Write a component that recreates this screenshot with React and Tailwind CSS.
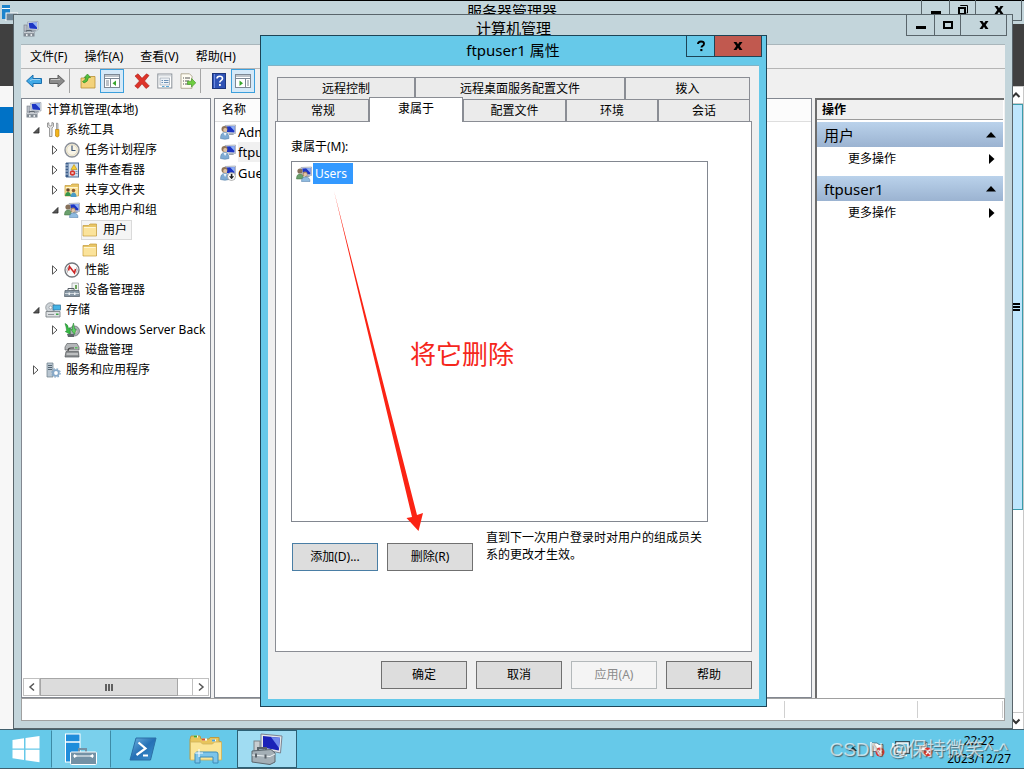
import React from "react";

const FONT = "font-['Noto_Sans','Noto_Sans_CJK_SC',sans-serif]";

/* ---------- small 16px icons ---------- */

function Svg({ children, size = "size-4", box = "0 0 16 16" }) {
  return (
    <svg viewBox={box} className={`${size} shrink-0`} aria-hidden="true">
      {children}
    </svg>
  );
}

function Screen({ x = 5, y = 1 }) {
  return (
    <g transform={`translate(${x} ${y})`}>
      <path d="M0 0.5 L10.5 0 L10.5 8.5 L1 8 Z" fill="#dfe4ea" stroke="#8b94a3" strokeWidth="0.6" />
      <path d="M1.2 1.5 L9.5 1 L9.5 7.5 L2 7 Z" fill="#1c35c4" />
      <path d="M5 1.3 L9.5 1 L9.5 6 Z" fill="#8fb0f5" />
      <path d="M4 8.4 h4 l1 1.6 h-5z" fill="#9aa2ad" />
    </g>
  );
}

function ComputerIcon() {
  return (
    <Svg>
      <rect x="1" y="4" width="3" height="6" fill="#b9bec6" stroke="#747b85" strokeWidth="0.6" />
      <Screen x={4.5} y={0.5} />
      <path d="M0.5 10.5 h11 v5 h-11z" fill="#808992" />
      <path d="M1 11 h10 v1.2 h-10z" fill="#c7ccd2" />
      <path d="M3 13 h1.6 v2 h-1.6z M7.5 13 h1.6 v2 h-1.6z" fill="#e6e9ec" />
      <path d="M3.5 10.5 v-1 h5 v1" fill="none" stroke="#5f6770" />
    </Svg>
  );
}

function UserIcon({ disabled = false }) {
  return (
    <Svg>
      <Screen />
      <circle cx="4.5" cy="5" r="3" fill="#8f7458" />
      <circle cx="5.2" cy="6" r="2" fill="#e2c3a6" />
      <path d="M0.5 14.5 q0 -6 4 -6 q4.5 0 4.5 6 q-4 1.6 -8.500 0z" fill="#7fabd4" stroke="#4b779f" strokeWidth="0.5" />
      <path d="M3.500 9 l1.600 3 l1.500 -3z" fill="#eef5fb" />
      {disabled && (
        <g>
          <circle cx="11.5" cy="11.500" r="4" fill="#fff" stroke="#8c8c8c" strokeWidth="0.7" />
          <path d="M10.800 8.800 h1.600 v2.400 h1.800 l-2.600 3 l-2.600 -3 h1.800z" fill="#222" />
        </g>
      )}
    </Svg>
  );
}

function GroupIcon() {
  return (
    <Svg>
      <Screen />
      <circle cx="4" cy="5" r="2.600" fill="#86705a" />
      <path d="M0.500 13 q0 -5 3.500 -5 q3.500 0 3.500 5z" fill="#6ba06d" stroke="#3b6e3c" strokeWidth="0.5" />
      <circle cx="9" cy="8" r="2.500" fill="#a88667" />
      <circle cx="9.300" cy="8.500" r="1.700" fill="#e3c4a8" />
      <path d="M5.500 15.500 q0 -4.500 4 -4.500 q4.500 0 4.500 4.500z" fill="#8fbbe0" stroke="#4877a6" strokeWidth="0.5" />
    </Svg>
  );
}

function ToolsIcon() {
  return (
    <Svg>
      <path d="M2.500 1 v4 l2 1 v8.500 h2.500 v-8.500 l1.500 -1.500 v-3.500 l-1.600 -0.500 v3 l-2 0.600 l-1 -1 v-2.300z" fill="#e3e3e3" stroke="#777" strokeWidth="0.7" />
      <path d="M11.500 1 l1.500 0.500 v6 h-1.500z" fill="#cfd3d8" stroke="#7b7b7b" strokeWidth="0.6" />
      <path d="M10.500 7.500 h3.500 v6.500 q-1.700 2 -3.500 0z" fill="#f3b51c" stroke="#b27b08" strokeWidth="0.6" />
    </Svg>
  );
}

function ClockIcon() {
  return (
    <Svg>
      <circle cx="8" cy="8" r="7" fill="#f7f3e6" stroke="#8a8f98" strokeWidth="1.400" />
      <circle cx="8" cy="8" r="5.300" fill="none" stroke="#d8cfae" strokeWidth="0.700" />
      <path d="M8 3.500 V8.500 H11.500" fill="none" stroke="#3f5877" strokeWidth="1.200" />
    </Svg>
  );
}

function EventIcon() {
  return (
    <Svg>
      <rect x="2.500" y="1" width="12" height="14" fill="#cfdff0" stroke="#4d6d95" />
      <rect x="1.500" y="1" width="3" height="14" fill="#3b5d8a" />
      <path d="M1 3 h3 M1 6 h3 M1 9 h3 M1 12 h3" stroke="#dfe8f2" strokeWidth="0.800" />
      <path d="M10 2.500 l3 5 h-6z" fill="#f8cc33" stroke="#a98200" strokeWidth="0.500" />
      <circle cx="8.500" cy="11" r="2.700" fill="#d5352c" />
      <path d="M7.500 10 l2 2 M9.500 10 l-2 2" stroke="#fff" strokeWidth="0.800" />
      <path d="M11.500 9.500 h2 M11.500 11.500 h2" stroke="#5b7ba5" strokeWidth="0.700" />
    </Svg>
  );
}

function FolderShape() {
  return (
    <g>
      <path d="M1 3.500 h5.500 l1.500 -1.500 h6.500 v12 h-13.500z" fill="#e8c565" stroke="#c29a3c" strokeWidth="0.700" />
      <path d="M1.500 5 h12.500 v8.500 h-12.500z" fill="#fbe39b" />
      <path d="M2 5.500 h11.500" stroke="#fff6d2" />
    </g>
  );
}

function FolderIcon() {
  return (
    <Svg>
      <FolderShape />
    </Svg>
  );
}

function SharedFolderIcon() {
  return (
    <Svg>
      <FolderShape />
      <circle cx="4" cy="8" r="1.800" fill="#6b4a2d" />
      <path d="M1 14 q0.500 -4 3 -4 q2.500 0 3 4z" fill="#37964b" />
      <circle cx="9.500" cy="8.500" r="1.800" fill="#8d5b35" />
      <path d="M6.500 15 q0.500 -4.500 3 -4.500 q3 0 3 4.500z" fill="#4b9bc6" />
    </Svg>
  );
}

function PerfIcon() {
  return (
    <Svg>
      <circle cx="8" cy="8" r="7" fill="#fbfbfb" stroke="#72767c" strokeWidth="1.300" />
      <path d="M3.500 10.500 a5 5 0 0 1 1 -6 M12.500 10.500 a5 5 0 0 0 0 -5" fill="none" stroke="#a8a8a8" />
      <path d="M4.500 8.500 L5.500 4.500 L10.500 11 L11.500 7" fill="none" stroke="#cc2424" strokeWidth="1.600" />
    </Svg>
  );
}

function DeviceIcon() {
  return (
    <Svg>
      <path d="M8 1 h6.500 v8 h-6.500z" fill="#f0f3f2" stroke="#969c9c" strokeWidth="0.700" />
      <path d="M11 3 h2 v4 h-2z" fill="#6ea65c" />
      <path d="M4 8 v-1.500 h6 v1.500" fill="none" stroke="#555d66" />
      <path d="M1 8.500 h14 l0.500 6 h-15z" fill="#8796a3" stroke="#4f5a64" strokeWidth="0.700" />
      <path d="M1 11.500 h14" stroke="#cfd7dd" />
      <path d="M4.500 10.500 h1.500 v2.500 h-1.500z M10 10.500 h1.500 v2.500 h-1.500z" fill="#eef1f3" />
    </Svg>
  );
}

function StorageIcon() {
  return (
    <Svg>
      <circle cx="5.500" cy="5.500" r="4.800" fill="#cdd3d7" stroke="#7f878d" strokeWidth="0.700" />
      <circle cx="5.500" cy="5.500" r="1.500" fill="#fff" stroke="#7f878d" strokeWidth="0.600" />
      <rect x="8" y="3" width="7.500" height="5" fill="#44b3e6" stroke="#2b6d93" strokeWidth="0.700" />
      <path d="M1 9.500 h14 v5.500 h-14z" fill="#dde0e2" stroke="#70767b" strokeWidth="0.800" />
      <rect x="11" y="11.500" width="2.500" height="1.500" fill="#3da54a" />
      <path d="M3 12.500 h6" stroke="#8d9398" />
    </Svg>
  );
}

function BackupIcon() {
  return (
    <Svg>
      <circle cx="10.500" cy="9" r="5" fill="#aab0b5" stroke="#62686d" strokeWidth="0.700" />
      <circle cx="11" cy="9.500" r="1.500" fill="#f3d7c9" />
      <path d="M1 1.500 q3 0.500 3.500 5 l1.700 -1 v7 l-5 -3 l1.500 -0.700 q-0.500 -4 -1.700 -7.300z" fill="#35ba43" stroke="#1d7a2a" strokeWidth="0.500" />
      <path d="M9.500 1 q-1.500 3 -1 6.500 l-1.500 0 l3.500 5 l1.700 -5.500 l-1.500 0 q-0.700 -3 -1.200 -6z" fill="#5fd165" stroke="#1d7a2a" strokeWidth="0.500" />
      <path d="M3 12 h7 v3 h-6z" fill="#60676c" />
    </Svg>
  );
}

function DiskIcon() {
  return (
    <Svg>
      <path d="M3 1.500 h10 l2 3.500 v3 h-14 v-3z" fill="#b4b7b9" stroke="#5f6365" strokeWidth="0.700" />
      <rect x="11" y="5" width="2.500" height="1.500" fill="#5cc05e" />
      <path d="M4 9 q0 -3 3 -3 h3" fill="none" stroke="#444" strokeWidth="1.200" />
      <path d="M2 9.500 h12.500 l0.500 5.500 h-14z" fill="#8d9092" stroke="#55595b" strokeWidth="0.700" />
      <path d="M2.500 12 h11.500" stroke="#eceeee" />
    </Svg>
  );
}

function ServicesIcon() {
  return (
    <Svg>
      <path d="M2 1 h6 v14 h-6z" fill="#b9c6d1" stroke="#6b7b88" strokeWidth="0.700" />
      <path d="M3 3.500 h4 M3 5.500 h4 M3 7.500 h4" stroke="#566672" />
      <circle cx="11" cy="11" r="2.800" fill="none" stroke="#86a9c9" strokeWidth="1.800" />
      <circle cx="11" cy="11" r="4.200" fill="none" stroke="#86a9c9" strokeWidth="1.200" strokeDasharray="1.700 1.600" />
    </Svg>
  );
}

/* ---------- toolbar icons ---------- */

function ArrowIcon({ left = false, fill, stroke }) {
  return (
    <Svg>
      <path
        d={left ? "M0.500 8 L7 2 V5.500 H15.500 V10.500 H7 V14 Z" : "M15.500 8 L9 2 V5.500 H0.500 V10.500 H9 V14 Z"}
        fill={fill}
        stroke={stroke}
        strokeLinejoin="round"
      />
      <path d={left ? "M4 7.500 L6.500 6.500 H14" : "M2 6.500 H11"} stroke="#ffffff" strokeOpacity="0.500" fill="none" />
    </Svg>
  );
}

function UpFolderIcon() {
  return (
    <Svg>
      <path d="M1 5 h5 l1 -1.500 h8 v11.500 h-14z" fill="#f3d27b" stroke="#b88f35" strokeWidth="0.800" />
      <path d="M2.500 8.500 q3 -1 3.500 -4 h-1.800 l3.300 -3.500 l3 3.500 h-2 q-0.500 4.500 -4.500 5.500z" fill="#54bf3d" stroke="#2d8420" strokeWidth="0.600" />
    </Svg>
  );
}

function PaneIcon({ right = false }) {
  return (
    <Svg>
      <rect x="0.500" y="1.500" width="15" height="13" fill="#fff" stroke="#7d8894" />
      <path d="M1 3 h14 M1 5.500 h14" stroke="#7d8894" />
      <path d={right ? "M10.500 6 v8" : "M6.500 6 v8"} stroke="#7d8894" />
      <path d={right ? "M12 8 h2 M12 10 h2 M12 12 h2" : "M2 8 h3 M2 10 h3 M2 12 h3"} stroke="#7d8894" />
      <path d={right ? "M4.500 7.500 l3.500 2.700 l-3.500 2.700z" : "M12 7.500 l-3.500 2.700 l3.500 2.700z"} fill="#37a52b" />
    </Svg>
  );
}

function DeleteIcon() {
  return (
    <Svg>
      <path d="M1 3 L4 0.800 L8 5.300 L12.500 0.800 L15 2.500 L10.500 8 L15.300 13 L12 15.500 L8 10.800 L4 15.500 L0.800 13 L5.500 8 Z" fill="#dd3329" stroke="#a81c16" strokeWidth="0.600" />
    </Svg>
  );
}

function PropertiesIcon() {
  return (
    <Svg>
      <rect x="0.800" y="1" width="14" height="14" fill="#fff" stroke="#8b9299" />
      <path d="M1 2.800 h13.500" stroke="#c4cad0" />
      <rect x="3" y="5" width="9.500" height="7" fill="#edf2f7" stroke="#97a1ab" strokeWidth="0.700" />
      <path d="M4.500 7.500 h1.500 M7 7.500 h4.500 M4.500 9.500 h1.500 M7 9.500 h4.500" stroke="#6d91b5" />
      <path d="M5 13.500 h2.500 M9 13.500 h3" stroke="#5aa8d8" />
    </Svg>
  );
}

function ExportIcon() {
  return (
    <Svg>
      <path d="M1 0.800 h8.500 l2.500 2.500 v12 h-11z" fill="#fffdf2" stroke="#a29a82" strokeWidth="0.800" />
      <path d="M3 5 h1 M5 5 h5 M3 8 h1 M5 8 h4 M3 11 h1 M5 11 h5" stroke="#555" />
      <path d="M7.500 8.200 h4 v-2.700 l4.300 4.300 l-4.300 4.300 v-2.700 h-4z" fill="#6fce40" stroke="#3c8f21" strokeWidth="0.600" />
    </Svg>
  );
}

function HelpIcon() {
  return (
    <Svg>
      <rect x="1.500" y="0.500" width="13" height="15" fill="#2f52b5" stroke="#1c357d" />
      <path d="M3.500 1 v14" stroke="#6d8be0" />
      <path d="M6 5.500 q0 -2.300 2.800 -2.300 q2.700 0 2.700 2.200 q0 1.300 -1.500 2.200 q-1.200 0.700 -1.200 2" fill="none" stroke="#fff" strokeWidth="1.600" />
      <rect x="8" y="11" width="1.800" height="1.900" fill="#fff" />
    </Svg>
  );
}

/* ---------- window parts ---------- */

function Glyph({ kind }) {
  return (
    <svg viewBox="0 0 12 12" className="size-3" aria-hidden="true">
      {kind === "min" && <rect x="1" y="7" width="10" height="3" />}
      {kind === "max" && <rect x="2" y="3" width="8" height="6" fill="none" stroke="#000" strokeWidth="2" />}
      {kind === "restore" && (
        <g fill="none" stroke="#000">
          <path d="M3.500 2 V1.500 H10.500 V9 H9.500" />
          <rect x="2" y="4" width="6" height="6" strokeWidth="2" />
        </g>
      )}
      {kind === "close" && <path d="M1.500 2 h3 L6 4.300 L7.500 2 h3 L7.700 6 L10.500 10 h-3 L6 7.700 L4.500 10 h-3 L4.300 6 Z" />}
      {kind === "help" && (
        <g>
          <path d="M3 4 q0 -2.500 3 -2.500 q3 0 3 2.300 q0 1.300 -1.400 2 q-1.100 0.600 -1.100 1.700" fill="none" stroke="#000" strokeWidth="1.900" />
          <rect x="5.300" y="9" width="2.100" height="2.100" />
        </g>
      )}
    </svg>
  );
}

function WinButton({ kind, label, className }) {
  return (
    <button aria-label={label} className={`flex items-center justify-center ${className}`}>
      <Glyph kind={kind} />
    </button>
  );
}

function WindowControls({ middle }) {
  return (
    <div className="flex h-[22px] border-x border-b border-[#59656b]">
      <WinButton kind="min" label="最小化" className="w-7 border-r border-[#59656b]" />
      <WinButton kind={middle} label="最大化" className="w-[26px] border-r border-[#59656b]" />
      <WinButton kind="close" label="关闭" className="w-[45px]" />
    </div>
  );
}

function BackWindow() {
  return (
    <div className="absolute inset-x-0 top-px bottom-0 flex flex-col bg-[#f7f7f7]">
      <div className="flex h-[23px] items-start bg-[#c3d5db]">
        <div className="w-[103px] pt-1 pl-0.5">
          <Svg size="w-4 h-4">
            <rect x="0" y="0" width="8" height="14" fill="#1d84cc" />
            <path d="M0 3.500 h8" stroke="#fff" />
            <rect x="4" y="8" width="12" height="8" fill="#6f8798" stroke="#fff" />
          </Svg>
        </div>
        <h2 className="flex-1 text-center text-[15px] leading-5">服务器管理器</h2>
        <div className="-mt-0.5 mr-0.5">
          <WindowControls middle="restore" />
        </div>
      </div>
      <div className="h-[62px] bg-[#404040]" />
      <div className="flex flex-1">
        <div className="flex-1">
          <div className="mt-[21px] h-[26px] bg-[#0072c6]" />
        </div>
        <div className="flex w-[17px] flex-col border-r border-[#c8c8c8] bg-white">
          <button aria-label="向上滚动" className="flex h-[18px] items-center justify-end border-y border-[#c8c8c8] pr-0.5">
            <svg viewBox="0 0 10 10" className="size-2.5"><path d="M1.500 7 L5 3.500 L8.500 7" fill="none" stroke="#333" strokeWidth="2" /></svg>
          </button>
          <div className="flex h-[406px] items-center justify-end border border-[#3a9dac] bg-[#bee6fd] pr-0.5">
            <svg viewBox="0 0 10 8" className="h-2 w-2.5"><path d="M0 1 h10 M0 4 h10 M0 7 h10" stroke="#000" strokeWidth="2" /></svg>
          </div>
          <div className="flex-1" />
          <button aria-label="向下滚动" className="flex h-[17px] items-center justify-end border-t border-[#c8c8c8] pr-0.5">
            <svg viewBox="0 0 10 10" className="size-2.5"><path d="M1.500 3.500 L5 7 L8.500 3.500" fill="none" stroke="#333" strokeWidth="2" /></svg>
          </button>
        </div>
      </div>
    </div>
  );
}

function Expander({ state }) {
  return (
    <span className="flex w-3 shrink-0 justify-center">
      {state && (
        <svg viewBox="0 0 8 10" className="h-2.5 w-2" aria-hidden="true">
          {state === "open" ? (
            <path d="M7 2.500 V8 H1.500 Z" fill="#595959" stroke="#262626" strokeWidth="0.800" />
          ) : (
            <path d="M1.500 0.800 L6 5 L1.500 9.200 Z" fill="#fff" stroke="#555" />
          )}
        </svg>
      )}
    </span>
  );
}

const TREE = [
  { label: "计算机管理(本地)", icon: ComputerIcon, level: 0 },
  { label: "系统工具", icon: ToolsIcon, level: 1, state: "open" },
  { label: "任务计划程序", icon: ClockIcon, level: 2, state: "closed" },
  { label: "事件查看器", icon: EventIcon, level: 2, state: "closed" },
  { label: "共享文件夹", icon: SharedFolderIcon, level: 2, state: "closed" },
  { label: "本地用户和组", icon: GroupIcon, level: 2, state: "open" },
  { label: "用户", icon: FolderIcon, level: 3, selected: true },
  { label: "组", icon: FolderIcon, level: 3 },
  { label: "性能", icon: PerfIcon, level: 2, state: "closed" },
  { label: "设备管理器", icon: DeviceIcon, level: 2 },
  { label: "存储", icon: StorageIcon, level: 1, state: "open" },
  { label: "Windows Server Back", icon: BackupIcon, level: 2, state: "closed" },
  { label: "磁盘管理", icon: DiskIcon, level: 2 },
  { label: "服务和应用程序", icon: ServicesIcon, level: 1, state: "closed" },
];

const INDENT = ["pl-[3px]", "pl-2", "pl-[27px]", "pl-[59px]"];

function TreePane() {
  return (
    <nav className="flex w-[190px] shrink-0 flex-col border border-[#828790] bg-white">
      <ul className="flex-1 overflow-hidden pt-px">
        {TREE.map((n) => (
          <li key={n.label} className={`flex h-5 items-center gap-0.5 ${INDENT[n.level]}`}>
            {(n.level === 1 || n.level === 2) && <Expander state={n.state} />}
            <button
              className={`flex h-5 items-center gap-[5px] border whitespace-nowrap ${
                n.selected ? "border-[#dadada] bg-[#f5f5f5] pr-1" : "border-transparent"
              }`}
            >
              <n.icon />
              {n.label}
            </button>
          </li>
        ))}
      </ul>
      <div className="mr-px ml-px flex h-[18px]">
        <button aria-label="向左滚动" className="flex w-[17px] items-center justify-center border border-[#c0c0c0]">
          <svg viewBox="0 0 8 10" className="h-2.5 w-2"><path d="M6 1.500 L2 5 L6 8.500" fill="none" stroke="#555" strokeWidth="1.500" /></svg>
        </button>
        <div className="flex w-[138px] items-center justify-center border border-[#a6a6a6] bg-[#dcdcdc]">
          <svg viewBox="0 0 8 7" className="h-[7px] w-2"><path d="M1 0 v7 M4 0 v7 M7 0 v7" stroke="#606060" strokeWidth="2" /></svg>
        </div>
        <div className="flex-1 border-y border-[#c0c0c0]" />
        <button aria-label="向右滚动" className="flex w-[17px] items-center justify-center border border-[#c0c0c0]">
          <svg viewBox="0 0 8 10" className="h-2.5 w-2"><path d="M2 1.500 L6 5 L2 8.500" fill="none" stroke="#555" strokeWidth="1.500" /></svg>
        </button>
      </div>
      <div className="h-px" />
    </nav>
  );
}

function ListPane() {
  const rows = [
    { name: "Administrator" },
    { name: "ftpuser1", selected: true },
    { name: "Guest", disabled: true },
  ];
  return (
    <div className="min-w-0 flex-1 border border-[#828790] bg-white">
      <table className="w-full border-collapse">
        <thead>
          <tr>
            <th className="h-[22px] border-b border-[#dedede] bg-[#fcfcfc] p-0 pl-[7px] text-left font-normal">名称</th>
          </tr>
        </thead>
        <tbody className="text-[13px]">
          {rows.map((r) => (
            <tr key={r.name}>
              <td className="h-[21px] p-0 pl-[5px] align-top leading-5">
                <span className="flex items-center gap-0.5">
                  <UserIcon disabled={r.disabled} />
                  <span className={r.selected ? "bg-[#f0f0f0]" : ""}>{r.name}</span>
                </span>
              </td>
            </tr>
          ))}
        </tbody>
      </table>
    </div>
  );
}

function ActionGroup({ title }) {
  return (
    <section className="mb-[5px]">
      <button className="flex h-[25px] w-full items-center justify-between bg-linear-to-b from-[#bad2eb] to-[#9bb3d1] pr-[7px] pl-[7px] text-[15px]">
        {title}
        <svg viewBox="0 0 10 6" className="h-1.5 w-2.5"><path d="M5 0 L10 5.500 H0 Z" /></svg>
      </button>
      <button className="flex h-6 w-full items-center justify-between pr-2 pl-[31px]">
        更多操作
        <svg viewBox="0 0 6 10" className="h-2.5 w-1.5"><path d="M0 0 L5.500 5 L0 10 Z" /></svg>
      </button>
    </section>
  );
}

function ActionsPane() {
  return (
    <aside className="mr-px w-[189px] shrink-0 border-t-2 border-l-2 border-[#6d6d6d] bg-white pr-px">
      <h3 className="mb-0.5 h-5 border-b border-[#9b9b9b] bg-[#f0f0f0] pl-[5px] leading-5 font-bold">操作</h3>
      <ActionGroup title="用户" />
      <ActionGroup title="ftpuser1" />
    </aside>
  );
}

function ToolButton({ label, active = false, children }) {
  return (
    <button
      aria-label={label}
      className={`flex h-6 items-center justify-center border ${
        active ? "ml-px w-6 border-[#3c9fdc] bg-[#d5e9f8]" : "w-[23px] border-transparent"
      }`}
    >
      {children}
    </button>
  );
}

function Separator() {
  return <div className="mr-1.5 ml-px h-6 w-px bg-[#a5a5a5]" />;
}

function MainWindow() {
  return (
    <div className="absolute top-3.5 right-[11px] bottom-0 left-[13px] flex flex-col border border-[#59656b] bg-[#c3d5db] px-[7px] pb-[7px]">
      <div className="flex h-[29px] shrink-0">
        <div className="w-[100px] pt-1.5 pl-0.5">
          <ComputerIcon />
        </div>
        <h1 className="flex-1 text-center text-[15px] leading-[26px]">计算机管理</h1>
        <div className="-mt-px -mr-0.5">
          <WindowControls middle="max" />
        </div>
      </div>
      <div className="flex min-h-0 flex-1 flex-col border-t border-[#a9b6bb] bg-[#f0f0f0]">
        <nav className="flex h-6 shrink-0 items-center gap-[17px] border-b border-[#b5b5b5] pl-[9px]">
          {["文件(F)", "操作(A)", "查看(V)", "帮助(H)"].map((m) => (
            <button key={m}>{m}</button>
          ))}
        </nav>
        <div className="flex h-[29px] shrink-0 items-start pl-px">
          <ToolButton label="后退"><ArrowIcon left fill="#41a9e6" stroke="#1b6fae" /></ToolButton>
          <ToolButton label="前进"><ArrowIcon fill="#8b8b8b" stroke="#606060" /></ToolButton>
          <Separator />
          <ToolButton label="上一级"><UpFolderIcon /></ToolButton>
          <ToolButton label="显示/隐藏控制台树" active><PaneIcon /></ToolButton>
          <div className="w-1.5" />
          <ToolButton label="删除"><DeleteIcon /></ToolButton>
          <ToolButton label="属性"><PropertiesIcon /></ToolButton>
          <ToolButton label="导出列表"><ExportIcon /></ToolButton>
          <Separator />
          <ToolButton label="帮助"><HelpIcon /></ToolButton>
          <ToolButton label="显示/隐藏操作窗格" active><PaneIcon right /></ToolButton>
        </div>
        <div className="flex min-h-0 flex-1 gap-[3px]">
          <TreePane />
          <ListPane />
          <ActionsPane />
        </div>
        <footer className="flex h-[23px] shrink-0 border border-[#a0a0a0] bg-white">
          <div className="flex-1" />
          <div className="my-0.5 w-[133px] border-l border-[#d0d0d0]" />
          <div className="my-0.5 mr-px w-[86px] border-x border-[#d0d0d0]" />
        </footer>
      </div>
    </div>
  );
}

/* ---------- properties dialog ---------- */

function Tab({ width, active = false, children }) {
  return (
    <button
      role="tab"
      aria-selected={active}
      className={`border-[#8a8d94] ${width} ${
        active ? "z-10 -mt-0.5 -mb-px h-[25px] border-x border-t bg-white pb-0.5" : "h-[22px] border-x border-t bg-[#ebebeb]"
      }`}
    >
      {children}
    </button>
  );
}

function PushButton({ look = "border-[#707070] bg-[#dddddd]", disabled = false, children }) {
  return (
    <button disabled={disabled} className={`h-7 w-[86px] shrink-0 border ${look}`}>
      {children}
    </button>
  );
}

function PropertiesDialog() {
  return (
    <div role="dialog" aria-labelledby="dialog-title" className="absolute top-[35px] left-[260px] w-[507px] border border-[#1d4456] bg-[#66c9e9]">
      <div className="flex h-[29px] items-start">
        <div className="w-[79px]" />
        <h2 id="dialog-title" className="flex-1 text-center text-[15px] leading-7">ftpuser1 属性</h2>
        <div className="mr-1 flex h-[21px] border-x border-b border-[#1d4456]">
          <WinButton kind="help" label="帮助" className="w-7 border-r border-[#1d4456]" />
          <WinButton kind="close" label="关闭" className="w-[46px] bg-[#c1594f]" />
        </div>
      </div>
      <div className="mx-[7px] mb-[7px] border-t border-[#7fb3c6] bg-[#f0f0f0] px-[7px] pt-[11px] pb-2.5">
        <div role="tablist" className="mx-0.5 flex flex-wrap">
          <Tab width="w-[138px]">远程控制</Tab>
          <Tab width="w-[210px]">远程桌面服务配置文件</Tab>
          <Tab width="w-[125px]">拨入</Tab>
          <Tab width="w-[92px]">常规</Tab>
          <Tab width="w-[94px]" active>隶属于</Tab>
          <Tab width="w-[103px]">配置文件</Tab>
          <Tab width="w-[92px]">环境</Tab>
          <Tab width="w-[92px]">会话</Tab>
        </div>
        <div role="tabpanel" className="border border-[#8a8d94] bg-white pr-[43px] pb-20 pl-[15px]">
          <p id="member-label" className="pt-[17px] pb-1.5 leading-4">隶属于(M):</p>
          <ul role="listbox" aria-labelledby="member-label" className="h-[361px] border border-[#828790] pt-px pl-1">
            <li role="option" aria-selected="true" className="flex h-[21px] items-center gap-px">
              <GroupIcon />
              <span className="h-[21px] bg-[#3399ff] pr-1.5 pl-0.5 leading-[22px] text-white">Users</span>
            </li>
          </ul>
          <div className="mt-[7px] flex items-start gap-[9px] pl-px">
            <div className="mt-3.5 flex gap-[9px]">
              <PushButton look="border-[#4a7ea5] bg-[#dddddd]">添加(D)...</PushButton>
              <PushButton>删除(R)</PushButton>
            </div>
            <p className="flex-1 pl-1 leading-[17px]">直到下一次用户登录时对用户的组成员关系的更改才生效。</p>
          </div>
        </div>
        <div className="mt-[9px] flex justify-end gap-[9px]">
          <PushButton>确定</PushButton>
          <PushButton>取消</PushButton>
          <PushButton disabled look="border-[#b3b8ba] bg-[#f4f4f4] text-[#8b8b8b]">应用(A)</PushButton>
          <PushButton>帮助</PushButton>
        </div>
      </div>
    </div>
  );
}

/* ---------- taskbar ---------- */

function TaskButton({ label, look = "w-[62px] border-transparent", children }) {
  return (
    <button aria-label={label} className={`flex h-full items-center justify-center border ${look}`}>
      {children}
    </button>
  );
}

function RedCross({ x, y }) {
  return (
    <g>
      <circle cx={x} cy={y} r="4.500" fill="#d9362e" />
      <path d={`M${x - 2} ${y - 2} l4 4 M${x + 2} ${y - 2} l-4 4`} stroke="#fff" strokeWidth="1.400" />
    </g>
  );
}

function Taskbar() {
  return (
    <footer className="relative flex h-10 shrink-0 border-y border-[#41606e] bg-[#66c9e9]">
      <TaskButton label="开始" look="w-[51px] border-transparent">
        <svg viewBox="0 0 28 28" className="size-7">
          <path d="M0.500 5 L12 3.300 V13.500 H0.500 Z M13.500 3 L27.500 1 V13.500 H13.500 Z M0.500 14.800 H12 V25 L0.500 23.300 Z M13.500 14.800 H27.500 V27.300 L13.500 25.300 Z" fill="#fff" />
        </svg>
      </TaskButton>
      <TaskButton label="服务器管理器" look="w-[60px] border-y-transparent border-x-[#3d8ba6] bg-[#7ad0ec]">
        <svg viewBox="0 0 34 34" className="size-[34px]">
          <rect x="1.500" y="2" width="14.500" height="28" fill="#1f8ddb" stroke="#fff" />
          <path d="M1.500 10 h14.500" stroke="#fff" strokeWidth="1.500" />
          <path d="M15 20 v-3 h7 v3" fill="none" stroke="#7391a5" strokeWidth="2" />
          <rect x="6.500" y="20" width="26" height="12.500" rx="1" fill="#7391a5" stroke="#fff" />
          <path d="M9 24 h21" stroke="#fff" />
          <path d="M10.500 22.500 l2 1.500 l-2 1.500z M28.500 22.500 l-2 1.500 l2 1.500z" fill="#fff" stroke="#fff" />
        </svg>
      </TaskButton>
      <TaskButton label="PowerShell" look="w-[64px] border-transparent">
        <svg viewBox="0 0 28 24" className="h-6 w-7">
          <defs>
            <linearGradient id="ps" x1="0" y1="0" x2="1" y2="1">
              <stop offset="0" stopColor="#74b7e4" />
              <stop offset="0.500" stopColor="#2570b5" />
              <stop offset="1" stopColor="#3f94d0" />
            </linearGradient>
          </defs>
          <path d="M7 1 H27 L21.500 23 H1 Z" fill="url(#ps)" stroke="#2a6fa6" />
          <path d="M9.500 5.500 L16.500 11.500 L7.500 18" fill="none" stroke="#fff" strokeWidth="2.200" />
          <path d="M14 18.500 h5" stroke="#fff" strokeWidth="2" />
        </svg>
      </TaskButton>
      <TaskButton label="文件资源管理器" look="w-[62px] border-transparent">
        <svg viewBox="0 0 34 30" className="h-[30px] w-[34px]">
          <path d="M2 2 h9 l1 3 h8 l1 -1.500 h9 v4 h2 v18 h-31 v-20z" fill="#e8c55c" stroke="#b99b45" />
          <path d="M5 2.500 h4 M13 5.500 h5 M23 6.500 h4" stroke="#fff" strokeWidth="2" />
          <path d="M5 2.500 h3" stroke="#39a635" strokeWidth="2" />
          <path d="M13 5.500 h3" stroke="#d5512d" strokeWidth="2" />
          <path d="M23 6.500 h3" stroke="#4aa3d8" strokeWidth="2" />
          <path d="M1.500 8 h10 l2 2 h10 l2 -2 h7 v18 h-31z" fill="#fbe596" stroke="#cfb35b" strokeWidth="0.800" />
          <path d="M6 29 V20 q0 -2 2 -2 h19 q2 0 2 2 v9 h-5 v-6 h-13 v6z" fill="#7cc4ea" stroke="#3c8cb8" />
          <path d="M10 15 v8 M6 19 h8" stroke="#fff" />
        </svg>
      </TaskButton>
      <TaskButton label="计算机管理" look="w-[60px] border-[#2c6075] bg-[#a0dcf2]">
        <svg viewBox="0 0 32 32" className="size-8">
          <rect x="3" y="8" width="6" height="10" fill="#c8ccd0" stroke="#7b8288" />
          <path d="M10 1 L31 3 L29.500 20 L10 16 Z" fill="#e5e7ea" stroke="#7b8390" />
          <path d="M12 3 L29 4.700 L27.800 17.500 L12 14.500 Z" fill="#1a22b8" />
          <path d="M20 4 L29 4.700 L28 15 Z" fill="#7089ec" />
          <path d="M7 18 v-3 h8 v3" fill="none" stroke="#59626a" strokeWidth="2" />
          <path d="M1 18 L20 16.500 L24 20 V29 L19 31.500 L1 29 Z" fill="#a4afb6" stroke="#5c666d" />
          <path d="M1 22 L19 23.500 L24 21" fill="none" stroke="#edf1f3" />
          <path d="M5 20.500 v4 M14.500 21.500 v4" stroke="#596168" strokeWidth="2" />
        </svg>
      </TaskButton>
      <div className="flex flex-1 items-center justify-end pr-[13px]">
        <svg viewBox="0 0 86 18" className="mr-3 h-[18px] w-[86px]" aria-hidden="true">
          <path d="M0 11 L4 6.500 L8 11 Z" fill="#12303d" />
          <path d="M22 2 v14" stroke="#fff" strokeWidth="1.500" />
          <path d="M23 3 h5 l2 1.500 h4 v7 h-11z" fill="#fff" stroke="#34535f" strokeWidth="0.700" />
          <RedCross x={31} y={12} />
          <path d="M47.500 2.500 h12 v10 h-12z" fill="#66c9e9" stroke="#34535f" strokeWidth="3" />
          <rect x="48" y="3" width="11" height="9" fill="#66c9e9" stroke="#fff" strokeWidth="1.500" />
          <path d="M54 12 v3 M50 15.500 h8" stroke="#fff" strokeWidth="1.500" />
          <path d="M44 3 v4 h2 v8" fill="none" stroke="#fff" strokeWidth="1.500" />
          <path d="M70 6 h3 l5 -4 v14 l-5 -4 h-3z" fill="#fff" stroke="#34535f" strokeWidth="0.700" />
          <RedCross x={79} y={12} />
        </svg>
        <time className="pt-px text-center leading-[18px]">
          22:22
          <br />
          2023/12/27
        </time>
      </div>
      <span className="absolute top-1 right-4 font-['Liberation_Sans','Noto_Sans_CJK_SC',sans-serif] text-[19px] leading-8 text-white/65 [text-shadow:1px_1px_1px_rgb(60_60_60/0.7)]">
        CSDN @保持微笑^-^
      </span>
    </footer>
  );
}

export default function App() {
  return (
    <div className={`flex h-screen flex-col overflow-hidden bg-black text-xs text-black ${FONT}`}>
      <main className="relative min-h-0 flex-1">
        <BackWindow />
        <MainWindow />
        <PropertiesDialog />
        <svg viewBox="0 0 92 342" className="pointer-events-none absolute top-[191px] left-[333px] h-[342px] w-[92px]" aria-hidden="true">
          <path d="M1 0 L84 324 L90 322 L85.500 340 L73.500 327 L79 326 Z" fill="#fb2314" />
        </svg>
        <p className="pointer-events-none absolute top-[336px] left-[410px] text-[26px] leading-9 text-[#f5271c]">将它删除</p>
      </main>
      <Taskbar />
    </div>
  );
}
